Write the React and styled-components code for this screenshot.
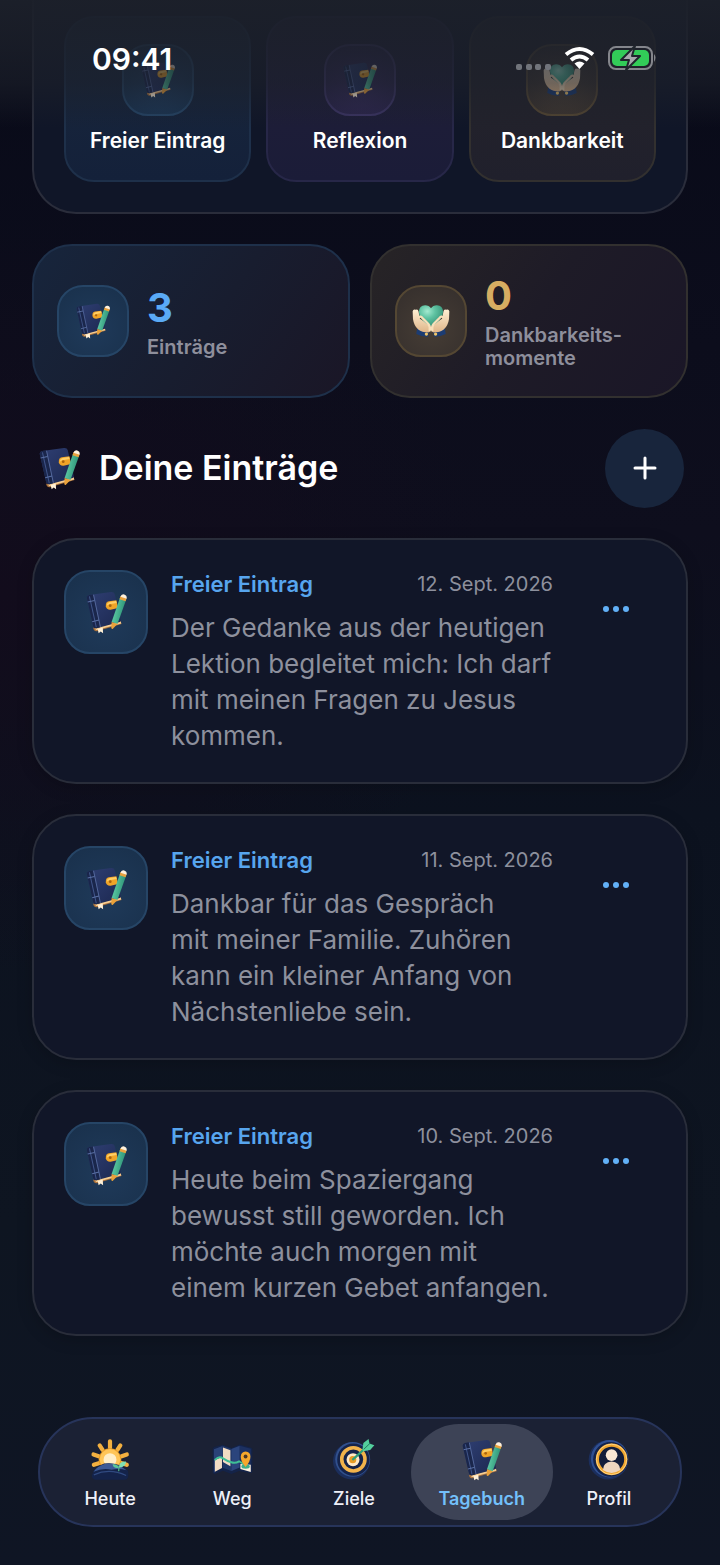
import styled, { createGlobalStyle } from "styled-components"

const GlobalStyle = createGlobalStyle`
	* { box-sizing: border-box; }
	body {
		margin: 0;
		background: #0d111e;
		color: #fff;
		font-family: Inter, "Liberation Sans", sans-serif;
	}
	button { font: inherit; color: inherit; }
	h1, h2, h3, p { margin: 0; }
`

const tones = {
	blue: {
		card: "linear-gradient(180deg, #19273c, #14213a)",
		stat: "linear-gradient(125deg, #17253c 0%, #181d2f 55%, #1a1626 100%)",
		line: "#1e304a",
		tile: "radial-gradient(circle at 50% 60%, #1f3a5a, #19304b)",
		tileLine: "#264566",
		text: "#5aaaf5",
	},
	violet: {
		card: "linear-gradient(180deg, #211f38, #1b1c38)",
		line: "#272748",
		tile: "radial-gradient(circle at 50% 60%, #322a55, #262244)",
		tileLine: "#3c3564",
	},
	gold: {
		card: "linear-gradient(180deg, #26252b, #20202c)",
		stat: "linear-gradient(125deg, #272426 0%, #1e1b27 50%, #1a1627 100%)",
		line: "#32302f",
		tile: "radial-gradient(circle at 50% 60%, #463d35, #342e2c)",
		tileLine: "#544733",
		text: "#d6ad62",
	},
}

const Page = styled.div`
	position: relative;
	min-height: 100vh;
	display: flex;
	flex-direction: column;
	background:
		radial-gradient(500px 380px at 0% 38%, #120c1c 0%, #120c1c00 100%),
		linear-gradient(180deg, #080a18 0%, #0c0d1c 22%, #0e0e1d 34%, #0c121f 52%, #0e1521 78%, #0f1524 100%);
`

const StatusBar = styled.header`
	position: absolute;
	top: 0;
	left: 0;
	right: 0;
	padding: 40px 62px 50px 92px;
	display: flex;
	justify-content: space-between;
	align-items: center;
	background: linear-gradient(180deg, #1c202af5 0%, #1c202acc 35%, #1c202a99 65%, #1c202a00 100%);
`

const Clock = styled.time`
	font-size: 30px;
	line-height: 38px;
	font-weight: 600;
`

const Content = styled.main`
	display: flex;
	flex-direction: column;
	gap: 30px;
	padding: 0 32px 80px;
`

const Hero = styled.section`
	display: grid;
	grid-template-columns: repeat(3, 1fr);
	gap: 15px;
	padding: 16px 30px 30px;
	border: 2px solid #2a2d3b;
	border-top: 0;
	border-radius: 0 0 44px 44px;
	background: #101628;
`

const HeroButton = styled.button`
	display: flex;
	flex-direction: column;
	align-items: center;
	gap: 12px;
	padding: 26px 0;
	border: 2px solid ${p => tones[p.$tone].line};
	border-radius: 30px;
	background: ${p => tones[p.$tone].card};
	font-size: 21px;
	line-height: 26px;
	font-weight: 600;
`

const Tile = styled.span`
	flex: none;
	display: grid;
	place-items: center;
	width: ${p => p.$size}px;
	height: ${p => p.$size}px;
	border: 2px solid ${p => tones[p.$tone].tileLine};
	border-radius: 26px;
	background: ${p => tones[p.$tone].tile};
`

const Stats = styled.section`
	display: grid;
	grid-template-columns: 1fr 1fr;
	gap: 20px;
`

const Stat = styled.div`
	display: flex;
	align-items: center;
	gap: 18px;
	min-height: 154px;
	padding: 0 23px;
	border: 2px solid ${p => tones[p.$tone].line};
	border-radius: 40px;
	background: ${p => tones[p.$tone].stat};
`

const StatValue = styled.p`
	color: ${p => tones[p.$tone].text};
	font-size: 40px;
	line-height: 48px;
	font-weight: 700;
`

const StatLabel = styled.p`
	padding-top: 4px;
	color: #8e8f9c;
	font-size: 20px;
	line-height: 23px;
	font-weight: 600;
`

const ListHead = styled.div`
	display: flex;
	align-items: center;
	gap: 18px;
	min-height: 80px;
	padding: 0 4px 0 6px;
`

const Title = styled.h2`
	flex: 1;
	font-size: 34px;
	line-height: 44px;
	font-weight: 600;
`

const AddButton = styled.button`
	display: grid;
	place-items: center;
	width: 79px;
	height: 79px;
	padding: 0;
	border: 0;
	border-radius: 50%;
	background: #18253c;
`

const Entry = styled.article`
	display: flex;
	align-items: flex-start;
	gap: 23px;
	padding: 30px 30px 28px;
	border: 2px solid #292d3a;
	border-radius: 44px;
	background: #111628;
	box-shadow: 0 4px 16px #0000002e;
`

const EntryBody = styled.div`
	flex: 1;
	min-width: 0;
`

const EntryHead = styled.div`
	display: flex;
	justify-content: space-between;
	align-items: center;
	margin-bottom: 12px;
	line-height: 28px;
`

const EntryKind = styled.h3`
	color: #57a5ee;
	font-size: 22px;
	font-weight: 600;
`

const EntryDate = styled.time`
	color: #8d909d;
	font-size: 20px;
`

const EntryText = styled.p`
	color: #8d909d;
	font-size: 26px;
	line-height: 36px;
`

const MoreButton = styled.button`
	display: flex;
	justify-content: center;
	align-items: center;
	width: 80px;
	height: 78px;
	padding: 0;
	border: 0;
	background: none;
`

const TabBar = styled.nav`
	position: sticky;
	bottom: 38px;
	display: grid;
	grid-template-columns: 122fr 122fr 121fr 134fr 120fr;
	margin: auto 38px 38px;
	padding: 5px 11px 5px 9px;
	border: 2px solid #27345a;
	border-radius: 56px;
	background: #1b2134;
`

const Tab = styled.a`
	display: flex;
	flex-direction: column;
	align-items: center;
	gap: 5px;
	height: 96px;
	margin: 0 -4px;
	padding-top: 15px;
	border-radius: 48px;
	background: ${p => (p.$active ? "#3d4356" : "transparent")};
	color: ${p => (p.$active ? "#73c0fb" : "#eef0f8")};
	font-size: 18px;
	line-height: 26px;
	font-weight: ${p => (p.$active ? 600 : 500)};
	text-decoration: none;
`

const Book = ({ size = 42 }) => (
	<svg width={size} height={size} viewBox="24 24 126 126" aria-hidden="true">
		<defs>
			<linearGradient id="cover" x1="0" y1="0" x2="1" y2="1">
				<stop offset="0" stopColor="#2f3f73" />
				<stop offset="1" stopColor="#1c2850" />
			</linearGradient>
			<linearGradient id="pencil" x1="0" y1="0" x2="1" y2=".3">
				<stop offset="0" stopColor="#6bdcb2" />
				<stop offset="1" stopColor="#2c9175" />
			</linearGradient>
		</defs>
		<path d="M48 132l80-20 3 9-72 21q-10 1-11-10z" fill="#a9713c" />
		<path d="M54 132l75-19 1 6-74 20z" fill="#f7cd90" />
		<path d="M29 44q0-6 7-8l64-9q9-1 11 6l18 76q1 5-3 6l-68 18q-8 1-10-6z" fill="url(#cover)" />
		<path d="M29 44q0-6 7-8l12-2 20 96-10 3q-8 1-10-6z" fill="#1a264b" />
		<path d="M37 40l20 90" stroke="#40558a" strokeWidth="3" />
		<path d="M49 35l20 94" stroke="#5a70a5" strokeWidth="2.5" />
		<path d="M32 56l20-4M45 114l20-5" stroke="#5a70a5" strokeWidth="3" />
		<path d="M61 135l15-4 1 17-7-5-6 5z" fill="#fff0d6" />
		<path d="M94 54l22-3 5 23-22 5q-12 1-14-10-1-13 9-15z" fill="#f0a427" />
		<path d="M96 56l19-3 2 6-21 4q-7 2-8 6-1-10 8-13z" fill="#ffcf66" />
		<circle cx="98" cy="67" r="4" fill="#a9640f" />
		<path d="M126 45l18 6-25 70-17-6z" fill="url(#pencil)" />
		<path d="M102 115l17 6-14 14q-4 1-4-3z" fill="#eaa13a" />
		<path d="M125 48l3-9 18 6-3 9z" fill="#e8a13d" />
		<path d="M128 41q2-9 11-7 9 3 7 13z" fill="#fff1dc" />
	</svg>
)

const Hands = ({ size = 38 }) => (
	<svg width={size} height={size} viewBox="152 215 116 116" aria-hidden="true">
		<defs>
			<radialGradient id="heart" cx="35%" cy="28%" r="80%">
				<stop offset="0" stopColor="#a4ead0" />
				<stop offset=".4" stopColor="#5fc3a2" />
				<stop offset="1" stopColor="#2f8a70" />
			</radialGradient>
			<linearGradient id="skin" x1="0" y1="0" x2="0" y2="1">
				<stop offset="0" stopColor="#fff0d4" />
				<stop offset="1" stopColor="#dfb588" />
			</linearGradient>
		</defs>
		<path d="M168 294l36 10-3 17q-19 1-36-8z" fill="#1c3c72" />
		<path d="M252 294l-36 10 3 17q19 1 36-8z" fill="#1c3c72" />
		<path d="M154 243q2-8 10-4 6-3 8 5l4 22 24 15q10 8 8 22l-6 5q-20 0-31-9-13-11-16-32z" fill="url(#skin)" />
		<path d="M266 243q-2-8-10-4-6-3-8 5l-4 22-24 15q-10 8-8 22l6 5q20 0 31-9 13-11 16-32z" fill="url(#skin)" />
		<path d="M210 290q-37-20-37-45 1-19 19-20 12 0 18 9 6-9 18-9 18 1 19 20 0 25-37 45z" fill="url(#heart)" />
		<path d="M174 262q4-5 10 2l18 18q7 9 4 20M246 262q-4-5-10 2l-18 18q-7 9-4 20" stroke="#f7dfb9" strokeWidth="7" fill="none" strokeLinecap="round" />
		<circle cx="196" cy="313" r="5" fill="#f0c56a" />
		<circle cx="224" cy="313" r="5" fill="#f0c56a" />
	</svg>
)

const Sun = () => (
	<svg width="42" height="42" viewBox="180 114 126 130" aria-hidden="true">
		<path d="M243 121v20M211 134l9 14M275 134l-9 14M192 162l18 6M295 162l-18 6M193 194l18-6M295 194l-18-6" stroke="#f3b040" strokeWidth="13" strokeLinecap="round" />
		<circle cx="243" cy="178" r="35" fill="#e99b24" />
		<circle cx="243" cy="177" r="32" fill="#ffc558" />
		<circle cx="243" cy="178" r="20" fill="#ffeec8" />
		<path d="M187 226q4-24 38-36 42-6 74 22 4 26-9 28h-92q-12-3-11-14z" fill="#14234a" />
		<path d="M192 215q10-16 34-24 38-5 68 20-22-7-46-2-28-6-56 6z" fill="#3d5a96" />
		<path d="M193 225q48-22 100 2" stroke="#304a80" strokeWidth="4" fill="none" />
		<path d="M270 214q0-12 1-18" stroke="#4cae7f" strokeWidth="4" fill="none" />
		<path d="M270 203q-17 3-19-11 17-1 19 11z" fill="#5cc79a" />
		<path d="M271 202q-1-19 22-18-2 19-22 18z" fill="#7fe0b4" />
	</svg>
)

const MapIcon = () => (
	<svg width="42" height="42" viewBox="543 113 126 130" aria-hidden="true">
		<path d="M546 146q0-6 5-8l26-7 27 10 26-11 35 10q4 1 4 6v67q0 7-7 5l-34-6-24 9-26-10-24 10q-8 1-8-6z" fill="#142348" />
		<path d="M550 145l27-10v33l-24 10v38l-3 1z" fill="#2a4277" />
		<path d="M577 134l27 10v68l-27-10z" fill="#213766" />
		<path d="M578 139l23 9v49l-23-13z" fill="#f3dcc4" />
		<path d="M604 144l26-10v67l-26 11z" fill="#2b447c" />
		<path d="M630 134l34 9v70l-34-10z" fill="#1c3061" />
		<path d="M553 178l22-9v34l-22 11z" fill="#f3dcc4" />
		<path d="M632 190l32 3v22l-32-9z" fill="#fff2df" />
		<path d="M554 177q12-12 24-4t26 12q12 4 24-3l16 10" stroke="#3fbf95" strokeWidth="6" fill="none" strokeLinecap="round" />
		<ellipse cx="648" cy="198" rx="13" ry="7" fill="#3fae88" />
		<path d="M648 200q-15-18-15-32 1-15 15-16 15 1 15 16 0 14-15 32z" fill="#f6a72c" />
		<circle cx="648" cy="167" r="6" fill="#4a3524" />
	</svg>
)

const Target = () => (
	<svg width="42" height="42" viewBox="910 114 126 130" aria-hidden="true">
		<circle cx="965" cy="182" r="57" fill="#1b2e5c" />
		<circle cx="969" cy="177" r="54" fill="#31508d" />
		<circle cx="971" cy="178" r="50" fill="#15234a" />
		<circle cx="971" cy="177" r="36" fill="#15234a" stroke="#f2b34b" strokeWidth="11" />
		<circle cx="970" cy="178" r="20" fill="#ffe9c6" />
		<circle cx="969" cy="178" r="11" fill="#e99c25" />
		<path d="M970 177l46-42" stroke="#2f9f78" strokeWidth="7" strokeLinecap="round" />
		<path d="M999 148l3-22 16-12 3 14 15 5-13 15-22 4z" fill="#53cf9d" />
		<path d="M1003 146l20-19" stroke="#1f7a5b" strokeWidth="3" />
	</svg>
)

const Person = () => (
	<svg width="42" height="42" viewBox="712 114 126 130" aria-hidden="true">
		<circle cx="773" cy="178" r="61" fill="#1b2e5c" />
		<circle cx="777" cy="175" r="58" fill="#2f4f92" />
		<circle cx="780" cy="177" r="54" fill="#14224a" />
		<circle cx="783" cy="177" r="44" fill="#131d3a" stroke="#f0a62f" strokeWidth="10" />
		<circle cx="783" cy="177" r="47" fill="none" stroke="#ffd582" strokeWidth="3" />
		<path d="M756 210q1-24 27-26 26 2 27 26-27 18-54 0z" fill="#eed6c0" />
		<circle cx="783" cy="164" r="18" fill="#fae8d5" />
	</svg>
)

const StatusIcons = () => (
	<svg width="142" height="28" viewBox="0 0 142 28" aria-hidden="true">
		<g fill="#71747b">
			<rect y="19" width="6" height="6" rx="2" />
			<rect x="10" y="19" width="6" height="6" rx="2" />
			<rect x="19" y="19" width="6" height="6" rx="2" />
			<rect x="29" y="19" width="6" height="6" rx="2" />
		</g>
		<g fill="none" stroke="#fff" strokeWidth="4">
			<path d="M50 9.500q13.500-11 27 0" />
			<path d="M55 15q8.500-7 17 0" />
		</g>
		<path d="M63.500 24l-5-5.500q5-4 10 0z" fill="#fff" />
		<rect x="93" y="2" width="43" height="22" rx="7" fill="none" stroke="#84868c" strokeWidth="2" />
		<rect x="96" y="5" width="37" height="16" rx="5" fill="#32cc58" />
		<path d="M138 9q3 3 0 8z" fill="#84868c" />
		<path d="M119 1l-14 14h8l-3 10 14-14h-8z" fill="#a7a9ad" stroke="#20252d" strokeWidth="2" strokeLinejoin="round" />
	</svg>
)

const entries = [
	{ date: "2026-09-12", label: "12. Sept. 2026", text: "Der Gedanke aus der heutigen Lektion begleitet mich: Ich darf mit meinen Fragen zu Jesus kommen." },
	{ date: "2026-09-11", label: "11. Sept. 2026", text: "Dankbar für das Gespräch mit\u00a0meiner Familie. Zuhören kann ein kleiner Anfang von Nächstenliebe sein." },
	{ date: "2026-09-10", label: "10. Sept. 2026", text: "Heute beim Spaziergang bewusst still geworden. Ich möchte auch morgen mit einem kurzen Gebet anfangen." },
]

const tabs = [
	{ name: "Heute", Icon: Sun },
	{ name: "Weg", Icon: MapIcon },
	{ name: "Ziele", Icon: Target },
	{ name: "Tagebuch", Icon: Book, active: true },
	{ name: "Profil", Icon: Person },
]

const App = () => {
	return (
		<>
			<GlobalStyle />
			<Page>
				<Content>
					<Hero>
						<HeroButton $tone="blue">
							<Tile $tone="blue" $size={72}><Book size={36} /></Tile>
							Freier Eintrag
						</HeroButton>
						<HeroButton $tone="violet">
							<Tile $tone="violet" $size={72}><Book size={36} /></Tile>
							Reflexion
						</HeroButton>
						<HeroButton $tone="gold">
							<Tile $tone="gold" $size={72}><Hands /></Tile>
							Dankbarkeit
						</HeroButton>
					</Hero>
					<Stats>
						<Stat $tone="blue">
							<Tile $tone="blue" $size={72}><Book size={36} /></Tile>
							<div>
								<StatValue $tone="blue">3</StatValue>
								<StatLabel>Einträge</StatLabel>
							</div>
						</Stat>
						<Stat $tone="gold">
							<Tile $tone="gold" $size={72}><Hands /></Tile>
							<div>
								<StatValue $tone="gold">0</StatValue>
								<StatLabel>Dankbarkeits-<br />momente</StatLabel>
							</div>
						</Stat>
					</Stats>
					<ListHead>
						<Book size={43} />
						<Title>Deine Einträge</Title>
						<AddButton aria-label="Neuer Eintrag">
							<svg width="24" height="24" viewBox="0 0 24 24" aria-hidden="true">
								<path d="M12 2v20M2 12h20" stroke="#fff" strokeWidth="3" strokeLinecap="round" />
							</svg>
						</AddButton>
					</ListHead>
					{entries.map(entry => (
						<Entry key={entry.date}>
							<Tile $tone="blue" $size={84}><Book size={43} /></Tile>
							<EntryBody>
								<EntryHead>
									<EntryKind>Freier Eintrag</EntryKind>
									<EntryDate dateTime={entry.date}>{entry.label}</EntryDate>
								</EntryHead>
								<EntryText>{entry.text}</EntryText>
							</EntryBody>
							<MoreButton aria-label="Mehr">
								<svg width="26" height="6" viewBox="0 0 26 6" fill="#62b0f7" aria-hidden="true">
									<circle cx="3" cy="3" r="3" />
									<circle cx="13" cy="3" r="3" />
									<circle cx="23" cy="3" r="3" />
								</svg>
							</MoreButton>
						</Entry>
					))}
				</Content>
				<TabBar>
					{tabs.map(({ name, Icon, active }) => (
						<Tab key={name} href={"#" + name.toLowerCase()} $active={active}>
							<Icon />
							{name}
						</Tab>
					))}
				</TabBar>
				<StatusBar>
					<Clock>09:41</Clock>
					<StatusIcons />
				</StatusBar>
			</Page>
		</>
	)
}

export default App
